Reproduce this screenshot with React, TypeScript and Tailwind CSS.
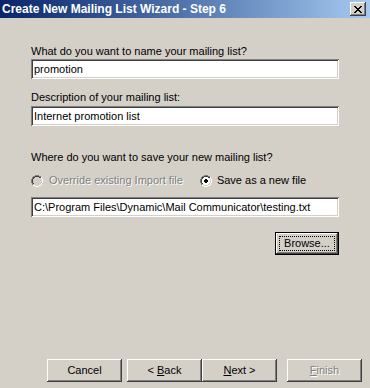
import React from 'react';

const raised =
  'shadow-[inset_-1px_-1px_#404040,inset_1px_1px_#ffffff,inset_-2px_-2px_#808080,inset_2px_2px_#d4d0c8]';
const sunken =
  'shadow-[inset_1px_1px_#808080,inset_-1px_-1px_#ffffff,inset_2px_2px_#404040,inset_-2px_-2px_#d4d0c8]';

const Field = ({ value }: { value: string }) => (
  <div className={`h-[20px] w-[308px] bg-white pl-[3px] flex items-center text-[11px] text-black ${sunken}`}>
    {value}
  </div>
);

const Radio = ({ checked, disabled }: { checked?: boolean; disabled?: boolean }) => (
  <svg width="12" height="12" viewBox="0 0 12 12" shapeRendering="crispEdges">
    <path d="M4 0h4v1H4zM2 1h2v1H2zM8 1h2v1H8zM1 2h1v2H1zM0 4h1v4H0zM1 8h1v2H1z" fill="#808080" />
    <path d="M4 1h4v1H4zM2 2h2v1H2zM8 2h2v1H8zM2 3h1v1H2zM1 4h1v4H1zM2 8h1v1H2z" fill="#404040" />
    <path d="M10 2h1v2h-1zM11 4h1v4h-1zM10 8h1v2h-1zM8 10h2v1H8zM2 10h2v1H2zM4 11h4v1H4z" fill="#ffffff" />
    <path d="M9 3h1v1H9zM10 4h1v4h-1zM9 8h1v1H9zM8 9h1v1H8zM3 9h1v1H3zM4 10h4v1H4z" fill="#d4d0c8" />
    <path
      d="M4 2h4v1h1v1h1v4H9v1H8v1H4V9H3V8H2V4h1V3h1z"
      fill={disabled ? '#d4d0c8' : '#ffffff'}
    />
    {checked && <path d="M5 4h2v1h1v2H7v1H5V7H4V5h1z" fill="#000000" />}
  </svg>
);

const Button = ({ children, disabled }: { children: React.ReactNode; disabled?: boolean }) => (
  <div
    className={`h-[23px] w-[75px] bg-[#d4d0c8] flex items-center justify-center text-[11px] ${raised} ${
      disabled ? 'text-[#808080] [text-shadow:1px_1px_#ffffff]' : 'text-black'
    }`}
  >
    {children}
  </div>
);

export default function App() {
  return (
    <div className="w-[370px] h-[388px] bg-[#d4d0c8] overflow-hidden flex flex-col font-['Liberation_Sans',Arial,sans-serif]">
      {/* title bar */}
      <div className="h-[18px] shrink-0 flex items-center justify-between pl-[2px] pr-[4px] bg-gradient-to-r from-[#0a246a] to-[#a6caf0]">
        <span className="text-white font-bold text-[12px]">Create New Mailing List Wizard - Step 6</span>
        <div className={`w-[16px] h-[14px] bg-[#d4d0c8] flex items-center justify-center ${raised}`}>
          <svg width="8" height="7" viewBox="0 0 8 7" shapeRendering="crispEdges">
            <path
              d="M0 0h2v1h1v1h2V1h1V0h2v1H7v1H6v1H5v1h1v1h1v1h1v1H6V6H5V5H3v1H2v1H0V6h1V5h1V4h1V3H2V2H1V1H0z"
              fill="#000"
            />
          </svg>
        </div>
      </div>

      <div className="flex flex-col pl-[31px] text-[11px] text-black">
        <div className="mt-[27px] leading-[13px]">What do you want to name your mailing list?</div>
        <div className="mt-[1px]">
          <Field value="promotion" />
        </div>

        <div className="mt-[12px] leading-[13px]">Description of your mailing list:</div>
        <div className="mt-[2px]">
          <Field value="Internet promotion list" />
        </div>

        <div className="mt-[25px] leading-[13px]">Where do you want to save your new mailing list?</div>
        <div className="mt-[10px] flex items-center h-[13px]">
          <Radio disabled />
          <span className="ml-[6px] text-[#808080] [text-shadow:1px_1px_#ffffff]">Override existing Import file</span>
          <div className="ml-[17px]">
            <Radio checked />
          </div>
          <span className="ml-[5px]">Save as a new file</span>
        </div>
        <div className="mt-[10px]">
          <Field value="C:\Program Files\Dynamic\Mail Communicator\testing.txt" />
        </div>

        <div className="mt-[15px] w-[308px] flex justify-end">
          <div className="h-[23px] w-[64px] border border-black bg-[#d4d0c8]">
            <div className="h-full w-full flex items-center justify-center shadow-[inset_-1px_-1px_#404040,inset_1px_1px_#ffffff,inset_-2px_-2px_#808080]">
              <div className="h-[15px] w-[56px] border border-dotted border-black flex items-center justify-center">
                Browse...
              </div>
            </div>
          </div>
        </div>
      </div>

      <div className="mt-auto mb-[6px] flex pl-[47px]">
        <Button>Cancel</Button>
        <div className="ml-[5px]">
          <Button>
            &lt; <span className="underline ml-[3px]">B</span>ack
          </Button>
        </div>
        <Button>
          <span className="underline">N</span>ext &gt;
        </Button>
        <div className="ml-[10px]">
          <Button disabled>
            <span className="underline">F</span>inish
          </Button>
        </div>
      </div>
    </div>
  );
}
